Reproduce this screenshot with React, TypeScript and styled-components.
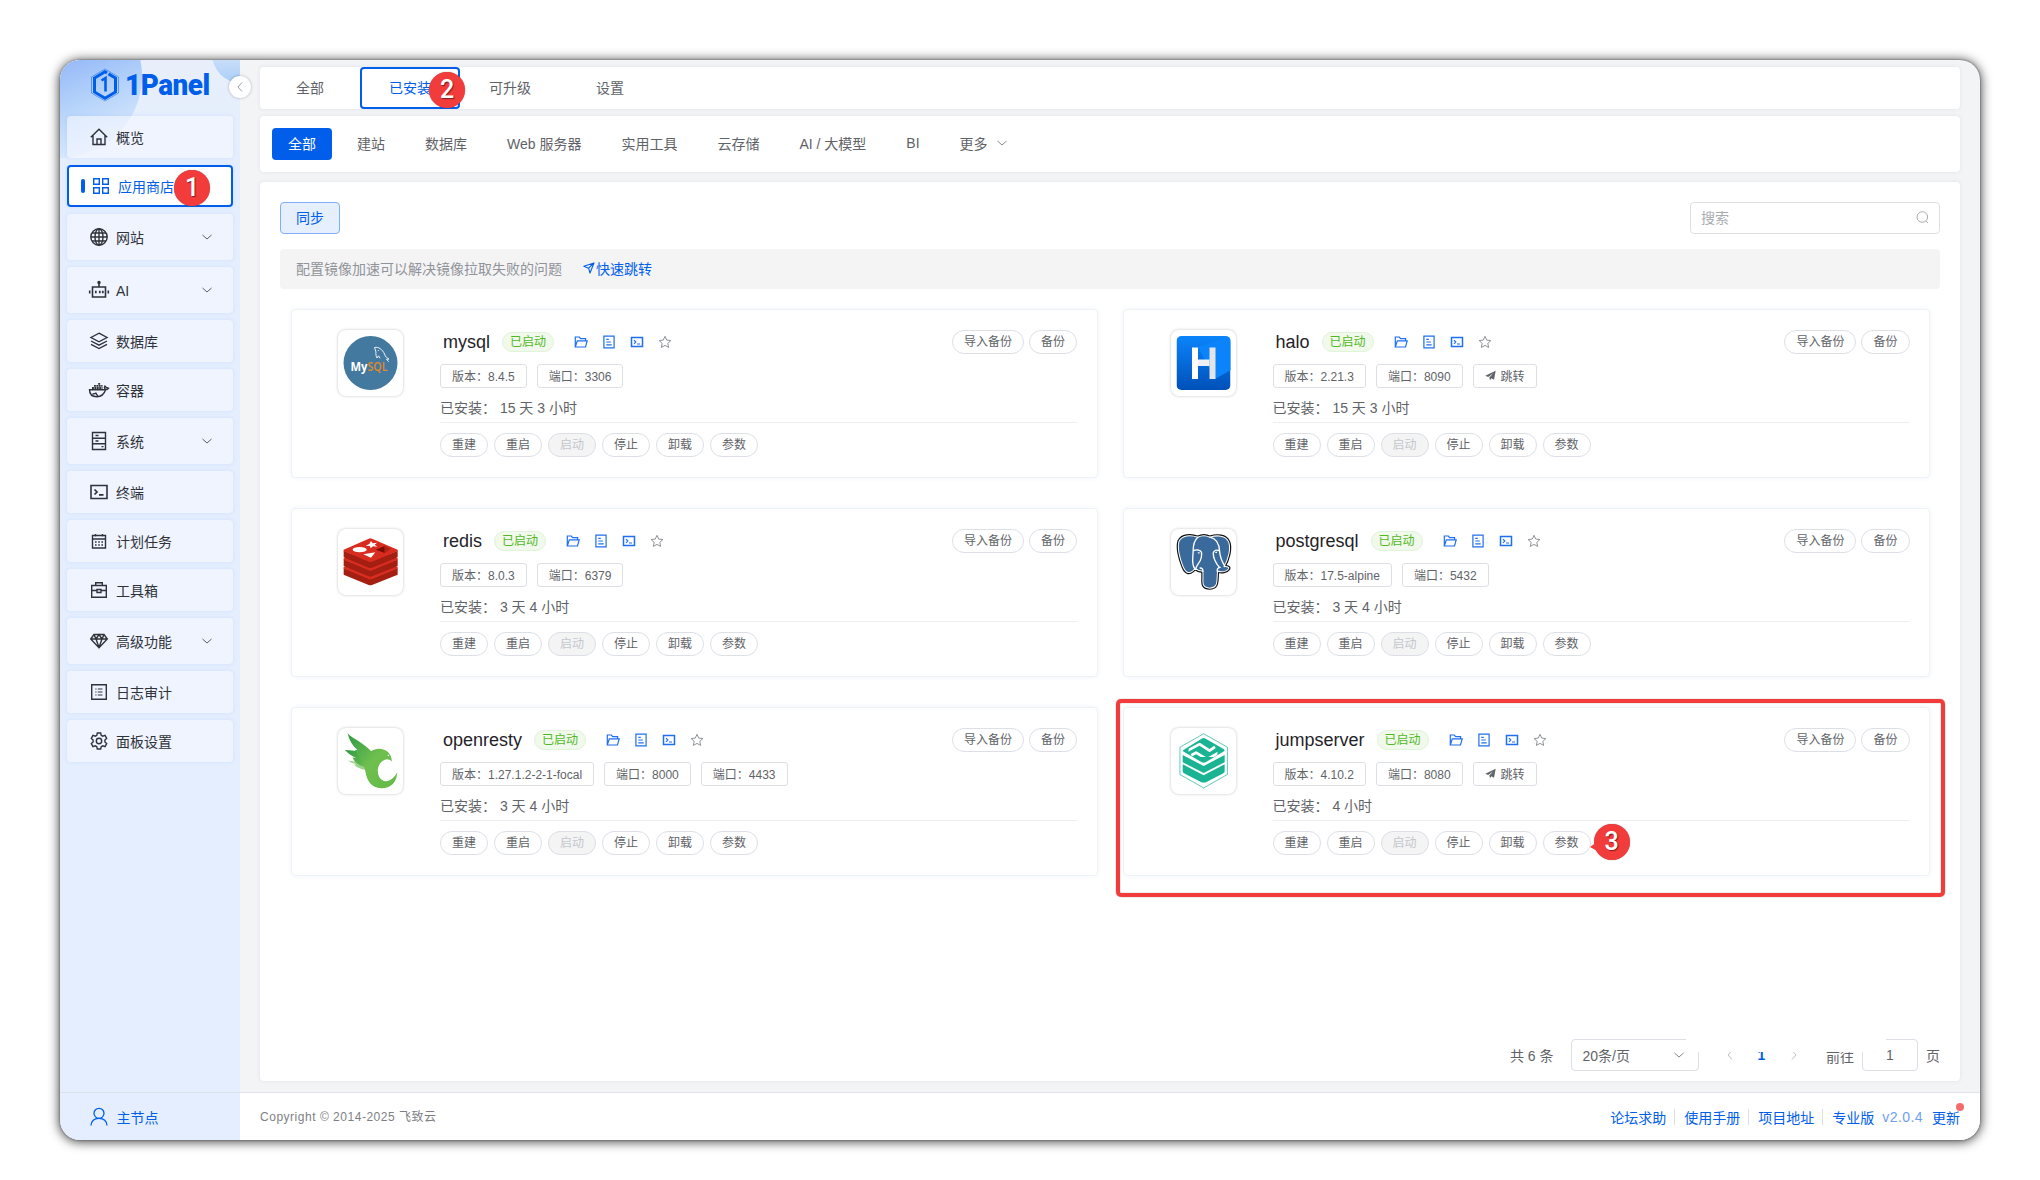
import React from 'react';
import styled, { createGlobalStyle, css } from 'styled-components';

const Global = createGlobalStyle`
  * { box-sizing: border-box; }
  body {
    margin: 0;
    background: #fff;
    font-family: "Liberation Sans", "Noto Sans CJK SC", sans-serif;
    font-size: 14px;
    color: #5f6368;
  }
  svg { display: block; flex: none; }
`;

const blue = '#005eeb';
const line = '#dcdfe6';

const Window = styled.div`
  width: 1920px;
  height: 1080px;
  margin: 60px;
  display: flex;
  border-radius: 20px;
  background: #f3f4f5;
  overflow: hidden;
  box-shadow: 0 0 2px rgba(0, 0, 0, 0.5), 0 1px 11px 1px rgba(0, 0, 0, 0.72);
`;

/* ---------- sidebar ---------- */
const Sidebar = styled.aside`
  position: relative;
  width: 180px;
  flex: none;
  display: flex;
  flex-direction: column;
  background: #e4eeff;
`;
const Decor = styled.svg`
  position: absolute;
  left: 0;
  top: 0;
`;
const Brand = styled.div`
  position: relative;
  height: 56px;
  padding: 7px 0 0 30px;
  display: flex;
  align-items: flex-start;
  gap: 5px;
`;
const Collapse = styled.button`
  position: absolute;
  right: -11px;
  top: 16px;
  z-index: 2;
  width: 22px;
  height: 22px;
  padding: 0;
  display: flex;
  align-items: center;
  justify-content: center;
  border: 0;
  border-radius: 50%;
  background: #fff;
  color: #7d8087;
  box-shadow: 0 0 3px rgba(0, 0, 0, 0.28);
`;
const Menu = styled.nav`
  position: relative;
  flex: 1;
  padding: 0 7px;
  display: flex;
  flex-direction: column;
  gap: 7px;
`;
const MenuItem = styled.a<{ $tall?: boolean; $active?: boolean }>`
  position: relative;
  height: ${(p) => (p.$tall ? 46 : 42)}px;
  padding: 0 20px 0 23px;
  display: flex;
  align-items: center;
  border-radius: 4px;
  background: rgba(246, 249, 255, 0.6);
  box-shadow: 0 0 4px rgba(0, 94, 235, 0.09);
  color: #2f3238;
  line-height: 20px;
  ${(p) =>
    p.$active &&
    css`
      padding-left: 12px;
      border: 2px solid ${blue};
      background: #fff;
      color: ${blue};
    `}
`;
const ActiveBar = styled.span`
  width: 4px;
  height: 14px;
  border-radius: 2px;
  margin-right: 7px;
  background: ${blue};
`;
const MenuLabel = styled.span`
  flex: 1;
  margin-left: 8px;
  padding-top: 1px;
  white-space: nowrap;
`;
const Node = styled.div`
  height: 48px;
  padding: 0 0 0 30px;
  display: flex;
  align-items: center;
  gap: 8.5px;
  border-top: 1px solid #dbe0ea;
  color: ${blue};
`;

/* ---------- badges ---------- */
const BadgeDot = styled.span<{ $left: number; $top: number; $tail?: boolean }>`
  position: absolute;
  z-index: 3;
  left: ${(p) => p.$left}px;
  top: ${(p) => p.$top}px;
  width: 36px;
  height: 36px;
  border-radius: 50%;
  background: #f23c3c;
  color: #fff;
  font: 500 25px/36px Roboto, sans-serif;
  text-align: center;
  text-shadow: 1px 1px 1px rgba(0, 0, 0, 0.5);
  box-shadow: 0 0 1px rgba(80, 30, 30, 0.7);
  ${(p) =>
    p.$tail &&
    css`
      &::before {
        content: '';
        position: absolute;
        left: -4px;
        top: 15px;
        border-right: 11px solid #f23c3c;
        border-top: 8px solid transparent;
        border-bottom: 6px solid transparent;
      }
    `}
`;

/* ---------- main ---------- */
const Main = styled.main`
  flex: 1;
  display: flex;
  flex-direction: column;
`;
const Content = styled.div`
  height: 1032px;
  padding: 7px 20px 11px;
  display: flex;
  flex-direction: column;
`;
const cardLook = css`
  border-radius: 4px;
  background: #fff;
  box-shadow: 0 0 4px rgba(0, 50, 130, 0.09);
`;
const Tabs = styled.div`
  ${cardLook}
  height: 42px;
  display: flex;
`;
const Tab = styled.div<{ $active?: boolean }>`
  position: relative;
  width: 100px;
  padding-bottom: 2px;
  display: flex;
  align-items: center;
  justify-content: center;
  border: 2px solid ${(p) => (p.$active ? blue : 'transparent')};
  border-radius: 4px;
  color: ${(p) => (p.$active ? blue : '#5f6368')};
`;
const Categories = styled.div`
  ${cardLook}
  height: 56px;
  margin-top: 7px;
  padding: 12px;
  display: flex;
  gap: 8px;
`;
const Category = styled.button<{ $active?: boolean }>`
  height: 32px;
  margin-right: ${(p) => (p.$active ? 1 : 0)}px;
  padding: 0 16px 2px;
  display: flex;
  align-items: center;
  gap: 8px;
  border: 0;
  border-radius: 4px;
  font: inherit;
  white-space: nowrap;
  background: ${(p) => (p.$active ? blue : 'transparent')};
  color: ${(p) => (p.$active ? '#fff' : '#5f6368')};
`;
const Panel = styled.section`
  ${cardLook}
  flex: 1;
  margin-top: 10px;
  padding: 20px 20px 10px;
  display: flex;
  flex-direction: column;
`;
const Toolbar = styled.div`
  height: 32px;
  display: flex;
  justify-content: space-between;
`;
const SyncButton = styled.button`
  width: 60px;
  padding: 0 0 2px;
  border: 1px solid #80aff5;
  border-radius: 4px;
  background: #e5effd;
  color: ${blue};
  font: inherit;
`;
const Search = styled.div`
  width: 250px;
  padding: 0 10px 2px;
  display: flex;
  align-items: center;
  justify-content: space-between;
  border: 1px solid ${line};
  border-radius: 4px;
  color: #a8abb2;
`;
const Notice = styled.div`
  height: 40px;
  margin-top: 15px;
  padding: 0 16px 2px;
  display: flex;
  align-items: center;
  border-radius: 4px;
  background: #f4f4f5;
  color: #909399;
`;
const NoticeLink = styled.a`
  margin-left: 21px;
  display: flex;
  align-items: center;
  gap: 1px;
  color: ${blue};
`;
const Grid = styled.div`
  margin: 20px 10px 0 10.5px;
  display: grid;
  grid-template-columns: 1fr 1fr;
  gap: 30px 25.5px;
`;
const AppCard = styled.article`
  position: relative;
  height: 169px;
  padding: 20px 19.5px 0 46.5px;
  display: flex;
  gap: 37px;
  border: 1px solid #eef1f6;
  border-radius: 4px;
  box-shadow: 0 0 4px rgba(0, 94, 235, 0.07);
`;
const LogoBox = styled.div`
  width: 65px;
  height: 66px;
  flex: none;
  border-radius: 8px;
  background: #fff;
  box-shadow: 0 0 3px rgba(0, 0, 0, 0.24);
`;
const AppBody = styled.div`
  flex: 1;
`;
const TitleRow = styled.div`
  height: 24px;
  display: flex;
  align-items: center;
`;
const AppName = styled.span`
  margin-left: 3px;
  font-size: 18px;
  line-height: 24px;
  color: #1f2329;
`;
const Status = styled.span`
  height: 20px;
  margin: 0 20px 0 12px;
  padding: 0 7px;
  border: 1px solid #e1f3d8;
  border-radius: 10px;
  background: #f0f9eb;
  color: #52b81f;
  font-size: 12px;
  line-height: 18px;
`;
const Actions = styled.span`
  flex: 1;
  display: flex;
  gap: 14px;
  color: #1f6ff0;
`;
const ButtonRow = styled.div<{ $tight?: boolean }>`
  display: flex;
  gap: ${(p) => (p.$tight ? 5 : 6)}px;
`;
const Pill = styled.button<{ $disabled?: boolean }>`
  height: 24px;
  padding: 0 11px;
  border: 1px solid ${line};
  border-radius: 12px;
  background: ${(p) => (p.$disabled ? '#f4f4f5' : '#fff')};
  color: ${(p) => (p.$disabled ? '#c4c7cc' : '#5f6368')};
  font: inherit;
  font-size: 12px;
  line-height: 21px;
`;
const PillAnchor = styled.span`
  position: relative;
  display: flex;
`;
const Tags = styled.div`
  margin-top: 10px;
  display: flex;
  gap: 10px;
`;
const Tag = styled.span`
  height: 24px;
  padding: 0 11px 2px;
  display: flex;
  align-items: center;
  gap: 5px;
  border: 1px solid ${line};
  border-radius: 3px;
  font-size: 12px;
`;
const Installed = styled.div`
  height: 35px;
  margin-bottom: 10px;
  padding-top: 6px;
  border-bottom: 1px solid #ebeef3;
  line-height: 28px;
  white-space: pre;
`;
const Highlight = styled.div`
  position: absolute;
  z-index: 2;
  left: -8px;
  top: -9px;
  right: -16px;
  bottom: -22px;
  border: 4px solid #f23c3c;
  border-radius: 5px;
  box-shadow: 0 0 1px rgba(90, 30, 30, 0.8), inset 0 0 1px rgba(90, 30, 30, 0.8);
`;

/* ---------- pagination ---------- */
const Pagination = styled.div`
  position: relative;
  height: 32px;
  margin-top: auto;
  display: flex;
  align-items: center;
  justify-content: flex-end;
`;
const Total = styled.span`
  margin-right: 17px;
`;
const PageSize = styled.div`
  width: 128px;
  height: 32px;
  margin-right: 15px;
  padding: 0 13px 1px 11px;
  display: flex;
  align-items: center;
  justify-content: space-between;
  border: 1px solid ${line};
  border-radius: 4px;
`;
const Pager = styled.span<{ $current?: boolean }>`
  width: 32px;
  display: flex;
  justify-content: center;
  color: ${(p) => (p.$current ? blue : '#a8abb2')};
  font-weight: ${(p) => (p.$current ? 700 : 400)};
`;
const Goto = styled.span`
  margin: 1px 8px 0 16.500px;
`;
const PageInput = styled.div`
  width: 56px;
  height: 32px;
  margin-right: 8px;
  border: 1px solid ${line};
  border-radius: 4px;
  text-align: center;
  line-height: 30px;
`;
const FadeStrip = styled.div`
  position: absolute;
  right: 54px;
  top: -2px;
  width: 200px;
  height: 15px;
  background: #fff;
`;

/* ---------- footer ---------- */
const Footer = styled.footer`
  height: 48px;
  padding: 0 20px 2px;
  display: flex;
  align-items: center;
  justify-content: space-between;
  border-top: 1px solid #e0e3ea;
  background: #fff;
`;
const Copyright = styled.span`
  font-size: 12px;
  letter-spacing: 0.52px;
  color: #7d7f85;
`;
const Links = styled.div`
  padding-top: 2px;
  display: flex;
  align-items: center;
  color: ${blue};
`;
const Split = styled.i`
  width: 1px;
  height: 16px;
  margin: 0 9px 0 8px;
  background: ${line};
`;
const Version = styled.span`
  margin: 0 9px 0 8px;
  color: #6fa0f0;
  letter-spacing: 0.42px;
`;
const Update = styled.span`
  position: relative;
  &::after {
    content: '';
    position: absolute;
    right: -4px;
    top: -4px;
    width: 8px;
    height: 8px;
    border-radius: 50%;
    background: #f56c6c;
  }
`;

/* ---------- icons ---------- */
const Chevron = ({ dir = 'down', size = 12 }: { dir?: 'down' | 'left' | 'right'; size?: number }) => {
  const d = { down: 'M1.500 4L6 8l4.500-4', left: 'M8 1.500L4 6l4 4.500', right: 'M4 1.500L8 6l-4 4.500' }[dir];
  return (
    <svg width={size} height={size} viewBox="0 0 12 12" fill="none" stroke="currentColor" strokeWidth=".9" opacity=".85">
      <path d={d} />
    </svg>
  );
};

const glyphs: Record<string, React.ReactNode> = {
  home: <path d="M.8 9.300L9 1.200l8.200 8.100M3 7.500v9h12v-9M7 16.500v-5.500h4v5.500" />,
  apps: <path d="M1.700 1.700h5.600v5.600H1.700zM10.700 1.700h5.600v5.600h-5.600zM1.700 10.700h5.600v5.600H1.700zM10.700 10.700h5.600v5.600h-5.600z" />,
  globe: (
    <>
      <circle cx="9" cy="9" r="8.200" />
      <ellipse cx="9" cy="9" rx="4" ry="8.200" />
      <path d="M9 .8v16.400M.8 9h16.400M2 5h14M2 13h14" />
    </>
  ),
  robot: (
    <>
      <path d="M2.500 6h13v10h-13zM9 2v4M-.3 9.500v3M18.300 9.500v3" strokeWidth="1.600" />
      <circle cx="9" cy="1.500" r="1" fill="currentColor" />
      <path d="M5.800 9.800v2.400M9.800 9.800v2.400M12.800 9.800v2.400" strokeWidth="1.700" />
    </>
  ),
  layers: <path d="M9 1.200l8 4.300-8 4.300-8-4.300zM1 9l8 4.200L17 9M1 12.300l8 4.200 8-4.200" />,
  docker: (
    <>
      <path d="M-.5 8.800h14c.8 0 1.300-.4 1.300-1.200-.6-.9-.5-1.700.2-2.600.8.500 1.100 1 1.300 1.700.8-.2 1.700 0 2.300.5-.6 1-1.600 1.600-3 1.600C14 13.500 11 15.800 7 15.800 2 15.800-.5 12.800-.5 8.800z" />
      <path d="M2 7h10.500M4 4.900h8.500M8.200 2.800h2" strokeWidth="1.800" strokeDasharray="1.900 .5" />
      <path d="M2.500 13c1.500 0 3-.3 4-1.200M8 15.300l-2-3" />
    </>
  ),
  server: (
    <>
      <path d="M2.500 .5h13v17h-13zM2.500 6.200h13M2.500 11.800h13" />
      <path d="M5.500 3.500h3M5.500 9h3M11.500 14.600h2" />
    </>
  ),
  terminal: (
    <>
      <path d="M1 2.500h16v13H1z" strokeWidth="1.600" />
      <path d="M4.500 6.500L7 9l-2.500 2.500M9 11.800h4.500" strokeWidth="1.700" />
    </>
  ),
  calendar: (
    <>
      <path d="M2.500 3.500h13v12.500h-13zM2.500 7h13M5.500 2v2.500M12.500 2v2.500" />
      <path d="M5 10h8.500M5 13h8.500" strokeDasharray="1.600 1.600" strokeWidth="1.500" />
    </>
  ),
  toolbox: (
    <path d="M1.700 4.500h14.600v11.800H1.700zM5.700 4.500V1.700h6.600v2.800M1.700 9.500H7M11 9.500h5.300M7 8.500h4v3H7z" />
  ),
  diamond: <path d="M4 2.500h10l3.300 4.500L9 15.800.7 7zM.7 7h16.600M6 7l3 8.500L12 7M4 2.500L6 7l3-4.500L12 7l2-4.500" />,
  logs: (
    <>
      <path d="M1.700 1.700h14.600v14.600H1.700z" />
      <path d="M7.800 6h4.700M7.800 9h4.700M7.800 12h4.700M5.300 6h1.200M5.300 9h1.200M5.300 12h1.200" strokeWidth="1.200" />
    </>
  ),
  gear: (
    <>
      <path d="M7.300 1h3.400l.5 2.300 1.500.9 2.300-.8 1.700 3-1.800 1.600v2l1.800 1.600-1.700 3-2.300-.8-1.500.9-.5 2.300H7.300l-.5-2.300-1.500-.9-2.300.8-1.700-3L3.100 10V8L1.300 6.400l1.700-3 2.300.8 1.500-.9z" />
      <circle cx="9" cy="9" r="2.700" />
    </>
  ),
  user: (
    <>
      <circle cx="9" cy="5.300" r="5" />
      <path d="M1 17.500c.3-4.200 3-7.200 8-7.200s7.700 3 8 7.200" />
    </>
  ),
};
const Glyph = ({ name, size = 18, weight = 1.4 }: { name: string; size?: number; weight?: number }) => (
  <svg width={size} height={size} viewBox="0 0 18 18" fill="none" stroke="currentColor" strokeWidth={weight} overflow="visible">
    {glyphs[name]}
  </svg>
);

const FolderIcon = () => (
  <svg width="14" height="14" viewBox="0 0 14 14" fill="none" stroke="currentColor" strokeWidth="1.200">
    <path d="M1.300 12V2h4l1.300 1.600h5V5.500M1.300 12L3.300 5.800h9.900L11.500 12zM3.300 5.800h9" />
  </svg>
);
const DocIcon = () => (
  <svg width="14" height="14" viewBox="0 0 14 14" fill="none" stroke="currentColor" strokeWidth="1.200">
    <path d="M1.900 1.100h10.200v11.800H1.900zM4.300 4.300h2.500M4.300 7h4.500M4.300 9.900h5.400" />
  </svg>
);
const TermIcon = () => (
  <svg width="14" height="14" viewBox="0 0 14 14" fill="none" stroke="currentColor" strokeWidth="1.500">
    <path d="M1.500 2.500h11v9h-11z" />
    <path d="M4 5.200L5.800 7 4 8.800M7 9h3" strokeWidth="1.200" />
  </svg>
);
const StarIcon = () => (
  <svg width="14" height="14" viewBox="0 0 14 14" fill="none" stroke="#8f9399" strokeWidth="1">
    <path d="M7 1.300l1.750 3.800 4.150.45-3.100 2.800.87 4.100L7 10.400l-3.670 2.050.87-4.100-3.100-2.800 4.150-.45z" strokeLinejoin="round" />
  </svg>
);
const PlaneIcon = () => (
  <svg width="11" height="11" viewBox="0 0 11 11" fill="#5f6368">
    <path d="M.3 5.800L10.700.8 9 9.700 6.300 8.300 5 10.300 4.300 7.500 8.600 3 3.200 6.900z" />
  </svg>
);
const LinkIcon = () => (
  <svg width="12" height="12" viewBox="0 0 12 12" fill="none" stroke="currentColor" strokeWidth="1.100" strokeLinejoin="round">
    <path d="M.8 4.300L11 1 7 11 5.600 6.200zM5.600 6.200L11 1" />
  </svg>
);
const SearchIcon = () => (
  <svg width="13" height="13" viewBox="0 0 13 13" fill="none" stroke="currentColor" strokeWidth="1">
    <circle cx="6.300" cy="6" r="5.300" />
    <path d="M10 10l2 2" />
  </svg>
);

/* ---------- logos ---------- */
const PanelMark = () => (
  <svg width="30" height="36" viewBox="0 0 30 36" fill="none" stroke={blue}>
    <path d="M15 2L28.500 10v16L15 34 1.500 26V10z" strokeWidth=".7" opacity=".7" />
    <path d="M17 6L15 4.800 4.500 11v14L15 31.200M13 30l2 1.200L25.500 25V11L18.500 6.900" strokeWidth="3" />
    <path d="M11.500 13.500l4-2.500v13.500" strokeWidth="2.600" />
  </svg>
);
const BrandName = styled.span`
  padding-top: 1px;
  color: ${blue};
  font: 900 29px/34px Roboto, sans-serif;
  letter-spacing: -0.5px;
  white-space: nowrap;
  transform: scaleX(0.96);
  transform-origin: left center;
`;

const Mysql = () => (
  <svg width="65" height="66" viewBox="0 0 65 66">
    <circle cx="32.500" cy="33" r="27" fill="#43789f" />
    <text x="12.500" y="41" fontFamily="Open Sans" fontWeight="700" fontSize="12" fill="#fff" textLength="17" lengthAdjust="spacingAndGlyphs">My</text>
    <text x="29.500" y="41" fontFamily="Open Sans" fontWeight="600" fontSize="12" fill="#e08a2c" textLength="20" lengthAdjust="spacingAndGlyphs">SQL</text>
    <path d="M36.500 17.500c4-1 8 2 10 6.500 1 3 2.200 3.800 4.500 5l-2.500.3 2.200 2.500M36.500 17.500l1.500 4.500c-.5 2 .2 4.300 1 6l1.500-2.200 1.500 2.500" fill="none" stroke="#fff" strokeWidth=".9" />
    <circle cx="40.300" cy="20.500" r=".6" fill="#fff" />
  </svg>
);
const Halo = () => (
  <svg width="65" height="66" viewBox="0 0 65 66">
    <defs>
      <linearGradient id="haloBg" x1="0" y1="0" x2="0" y2="1">
        <stop offset="0" stopColor="#0b84fb" />
        <stop offset="1" stopColor="#0050b8" />
      </linearGradient>
      <clipPath id="haloClip"><rect x="5.500" y="6" width="54" height="54" rx="5" /></clipPath>
    </defs>
    <g clipPath="url(#haloClip)">
      <rect x="5.500" y="6" width="54" height="54" fill="url(#haloBg)" />
      <path d="M27 17L60 6v34L44 49z" fill="#0b84fb" />
    </g>
    <path d="M21 17.500h6V49h-6z" fill="#fff" />
    <path d="M38.500 17.500h6V49h-6z" fill="#e2e4e8" />
    <path d="M27 29.500h11.500V36H27z" fill="#eef0f3" />
  </svg>
);
const Redis = () => (
  <svg width="65" height="66" viewBox="175 88 195 196">
    {[52, 26, 0].map((dy) => (
      <g key={dy} transform={`translate(0 ${dy})`}>
        <path d="M192 152v20l75 31q5 2 10 0l77-31v-20l-77 31q-5 2-10 0z" fill="#a41e11" />
        <path d="M192 149l75-33q5-2 10 0l77 33q2 3-2 5l-75 31q-5 2-10 0l-73-31q-4-2-2-5z" fill="#d82c20" />
      </g>
    ))}
    <g fill="#fff">
      <ellipse cx="240" cy="149" rx="21" ry="8" />
      <path d="M274 123l5 7 13-2-7 6 8 6-13-1-7 6-2-7-13-1 11-5z" />
      <path d="M251 163l36-6-13 16z" />
    </g>
    <path d="M289 149l26-11v21z" fill="#7a0c00" />
    <path d="M315 138l18 8-18 13z" fill="#ad2115" />
  </svg>
);
const elephant =
  'M262 112c-22-8-48-6-56 12-6 18 2 52 12 76 7 18 17 22 28 13l9-8c6 6 12 9 22 8 2 18-2 33 2 42 7 12 29 12 37 0 5-10 3-26 5-42 12 5 27 2 33-7 2-5-3-7-14-6 12-19 22-54 14-74-9-20-34-21-56-14-12-6-26-5-36 0z';
const Postgres = () => (
  <svg width="65" height="66" viewBox="182 88 194 196" strokeLinejoin="round" strokeLinecap="round">
    <path d={elephant} fill="#336791" stroke="#111" strokeWidth="10" />
    <path d={elephant} fill="#3a699b" stroke="#fff" strokeWidth="3" />
    <g fill="none" stroke="#fff" strokeWidth="4">
      <path d="M262 112c-10 9-14 25-14 41 0 20-6 40 5 53M248 153c8-5 22-4 25 4 2 14-3 25-9 33-6 9-8 14-9 17M298 112c18 4 28 20 29 42 1 14 4 26 16 45M327 153c-9-5-17-2-19 6 0 17 9 32 19 44M321 216c-3-7 0-14 8-14" />
      <path d="M277 214c1-7-2-10-8-10" />
    </g>
    <path d="M261 157l8 1-4 4zM312 157l9-2-3 5z" fill="#fff" />
  </svg>
);
const Openresty = () => (
  <svg width="65" height="66" viewBox="163 86 182 195" preserveAspectRatio="none">
    <defs>
      <linearGradient id="birdBody" x1="0" y1="0" x2="1" y2="1">
        <stop offset="0" stopColor="#2f9a45" />
        <stop offset=".5" stopColor="#6fbf4f" />
        <stop offset="1" stopColor="#62bb46" />
      </linearGradient>
      <linearGradient id="birdWing" x1="0" y1="0" x2="1" y2="1">
        <stop offset="0" stopColor="#2f9a45" />
        <stop offset="1" stopColor="#6fbf4f" />
      </linearGradient>
    </defs>
    <path d="M191 182c14 4 28 3 44 4l6 24c-14-2-26-8-34-16l9-1c-10-2-18-5-25-11z" fill="#9bd38a" />
    <path d="M182 151c18 2 34 1 52 8l12 44c-22-4-36-14-42-30l10 1c-12-5-22-12-32-23z" fill="url(#birdWing)" />
    <path
      d="M190 102c18 18 46 28 66 53 8-8 24-10 36-5 14 5 21 18 22 35-4-5-9-7-15-7-22 6-30 30-21 52 13 24 40 12 51-14-1 30-17 48-45 48-28-2-40-22-44-48-4-24-12-35-22-50l-8-16 8 2c-14-14-24-30-28-50z"
      fill="url(#birdBody)"
    />
    <circle cx="304" cy="167" r="2" fill="#fff" />
  </svg>
);
const Jumpserver = () => (
  <svg width="65" height="66" viewBox="175 115 189 196" preserveAspectRatio="none">
    <path d="M270 132l69 40v81l-69 40-69-40v-81z" fill="#fff" stroke="#1ab394" strokeWidth="2" />
    <g fill="#1ab394">
      <path d="M209 223l61 32 61-32v21q0 3-5 6l-48 25q-8 4-16 0l-48-25q-5-3-5-6z" />
      <path d="M209 195l61 33 61-33v22l-61 32-61-32z" />
      <path d="M211 180l53-33q6-4 12 0l53 31q4 3 0 6l-52 32q-7 4-14 0l-52-31q-4-3 0-5z" />
    </g>
    <path
      d="M206 190l52-29 29 19 16-11M334 174l-54 32-32-20-14 8"
      fill="none"
      stroke="#fff"
      strokeWidth="8"
      transform="translate(0 2)"
      strokeLinejoin="round"
      clipPath="url(#jumpMid)"
    />
    <clipPath id="jumpMid"><rect x="226" y="155" width="84" height="44" /></clipPath>
  </svg>
);

/* ---------- data ---------- */
const menu = [
  { icon: 'home', label: '概览' },
  { icon: 'apps', label: '应用商店', active: true },
  { icon: 'globe', label: '网站', sub: true },
  { icon: 'robot', label: 'AI', sub: true },
  { icon: 'layers', label: '数据库' },
  { icon: 'docker', label: '容器' },
  { icon: 'server', label: '系统', sub: true },
  { icon: 'terminal', label: '终端' },
  { icon: 'calendar', label: '计划任务' },
  { icon: 'toolbox', label: '工具箱' },
  { icon: 'diamond', label: '高级功能', sub: true },
  { icon: 'logs', label: '日志审计' },
  { icon: 'gear', label: '面板设置' },
];
const categories = ['全部', '建站', '数据库', 'Web 服务器', '实用工具', '云存储', 'AI / 大模型', 'BI'];
interface AppInfo {
  name: string;
  logo: React.ReactNode;
  version: string;
  ports: string[];
  age: string;
  web?: boolean;
  marked?: boolean;
}
const apps: AppInfo[] = [
  { name: 'mysql', logo: <Mysql />, version: '8.4.5', ports: ['3306'], age: '15 天 3 小时' },
  { name: 'halo', logo: <Halo />, version: '2.21.3', ports: ['8090'], age: '15 天 3 小时', web: true },
  { name: 'redis', logo: <Redis />, version: '8.0.3', ports: ['6379'], age: '3 天 4 小时' },
  { name: 'postgresql', logo: <Postgres />, version: '17.5-alpine', ports: ['5432'], age: '3 天 4 小时' },
  { name: 'openresty', logo: <Openresty />, version: '1.27.1.2-2-1-focal', ports: ['8000', '4433'], age: '3 天 4 小时' },
  { name: 'jumpserver', logo: <Jumpserver />, version: '4.10.2', ports: ['8080'], age: '4 小时', web: true, marked: true },
];

const InstalledApp = ({ app }: { app: AppInfo }) => (
  <AppCard>
    <LogoBox>{app.logo}</LogoBox>
    <AppBody>
      <TitleRow>
        <AppName>{app.name}</AppName>
        <Status>已启动</Status>
        <Actions>
          <FolderIcon />
          <DocIcon />
          <TermIcon />
          <StarIcon />
        </Actions>
        <ButtonRow $tight>
          <Pill>导入备份</Pill>
          <Pill>备份</Pill>
        </ButtonRow>
      </TitleRow>
      <Tags>
        <Tag>版本：{app.version}</Tag>
        {app.ports.map((p) => (
          <Tag key={p}>端口：{p}</Tag>
        ))}
        {app.web && (
          <Tag>
            <PlaneIcon />
            跳转
          </Tag>
        )}
      </Tags>
      <Installed>{`已安装： ${app.age}`}</Installed>
      <ButtonRow>
        {['重建', '重启', '启动', '停止', '卸载'].map((t) => (
          <Pill key={t} $disabled={t === '启动'}>{t}</Pill>
        ))}
        <PillAnchor>
          <Pill>参数</Pill>
          {app.marked && <BadgeDot $left={51} $top={-7} $tail>3</BadgeDot>}
        </PillAnchor>
      </ButtonRow>
    </AppBody>
    {app.marked && <Highlight />}
  </AppCard>
);

export default function App() {
  return (
    <>
      <Global />
      <Window>
        <Sidebar>
          <Decor width="180" height="100" viewBox="0 0 180 100">
            <defs>
              <linearGradient id="glow" gradientUnits="userSpaceOnUse" x1="0" y1="0" x2="40" y2="98">
                <stop offset="0" stopColor="#94b8f8" />
                <stop offset=".45" stopColor="#b5d3fa" />
                <stop offset="1" stopColor="#e2edfe" />
              </linearGradient>
              <linearGradient id="drop" x1="0" y1="0" x2="0" y2="1">
                <stop offset=".3" stopColor="#e0ebfc" />
                <stop offset="1" stopColor="#a9cdf8" />
              </linearGradient>
              <linearGradient id="sky" x1="0" y1="0" x2="0" y2="1">
                <stop offset="0" stopColor="#e8effa" />
                <stop offset="1" stopColor="#e4eeff" />
              </linearGradient>
            </defs>
            <rect width="180" height="100" fill="url(#sky)" />
            <circle cx="0" cy="16" r="82" fill="url(#glow)" />
            <circle cx="181" cy="-6" r="29" fill="url(#drop)" />
          </Decor>
          <Brand>
            <PanelMark />
            <BrandName>1Panel</BrandName>
          </Brand>
          <Collapse><Chevron dir="left" /></Collapse>
          <Menu>
            {menu.map((m) => (
              <MenuItem key={m.label} $tall={m.sub} $active={m.active}>
                {m.active && <ActiveBar />}
                <Glyph name={m.icon} />
                <MenuLabel>{m.label}</MenuLabel>
                {m.sub && <Chevron />}
                {m.active && <BadgeDot $left={105} $top={3}>1</BadgeDot>}
              </MenuItem>
            ))}
          </Menu>
          <Node>
            <Glyph name="user" weight={1.3} />
            主节点
          </Node>
        </Sidebar>
        <Main>
          <Content>
            <Tabs>
              <Tab>全部</Tab>
              <Tab $active>
                已安装
                <BadgeDot $left={67} $top={3}>2</BadgeDot>
              </Tab>
              <Tab>可升级</Tab>
              <Tab>设置</Tab>
            </Tabs>
            <Categories>
              {categories.map((c, i) => (
                <Category key={c} $active={i === 0}>{c}</Category>
              ))}
              <Category>更多 <Chevron /></Category>
            </Categories>
            <Panel>
              <Toolbar>
                <SyncButton>同步</SyncButton>
                <Search>搜索 <SearchIcon /></Search>
              </Toolbar>
              <Notice>
                配置镜像加速可以解决镜像拉取失败的问题
                <NoticeLink><LinkIcon />快速跳转</NoticeLink>
              </Notice>
              <Grid>
                {apps.map((a) => <InstalledApp key={a.name} app={a} />)}
              </Grid>
              <Pagination>
                <Total>共 6 条</Total>
                <PageSize>20条/页 <Chevron /></PageSize>
                <Pager><Chevron dir="left" /></Pager>
                <Pager $current>1</Pager>
                <Pager><Chevron dir="right" /></Pager>
                <Goto>前往</Goto>
                <PageInput>1</PageInput>
                页
                <FadeStrip />
              </Pagination>
            </Panel>
          </Content>
          <Footer>
            <Copyright>Copyright © 2014-2025 飞致云</Copyright>
            <Links>
              论坛求助<Split />使用手册<Split />项目地址<Split />专业版
              <Version>v2.0.4</Version>
              <Update>更新</Update>
            </Links>
          </Footer>
        </Main>
      </Window>
    </>
  );
}
